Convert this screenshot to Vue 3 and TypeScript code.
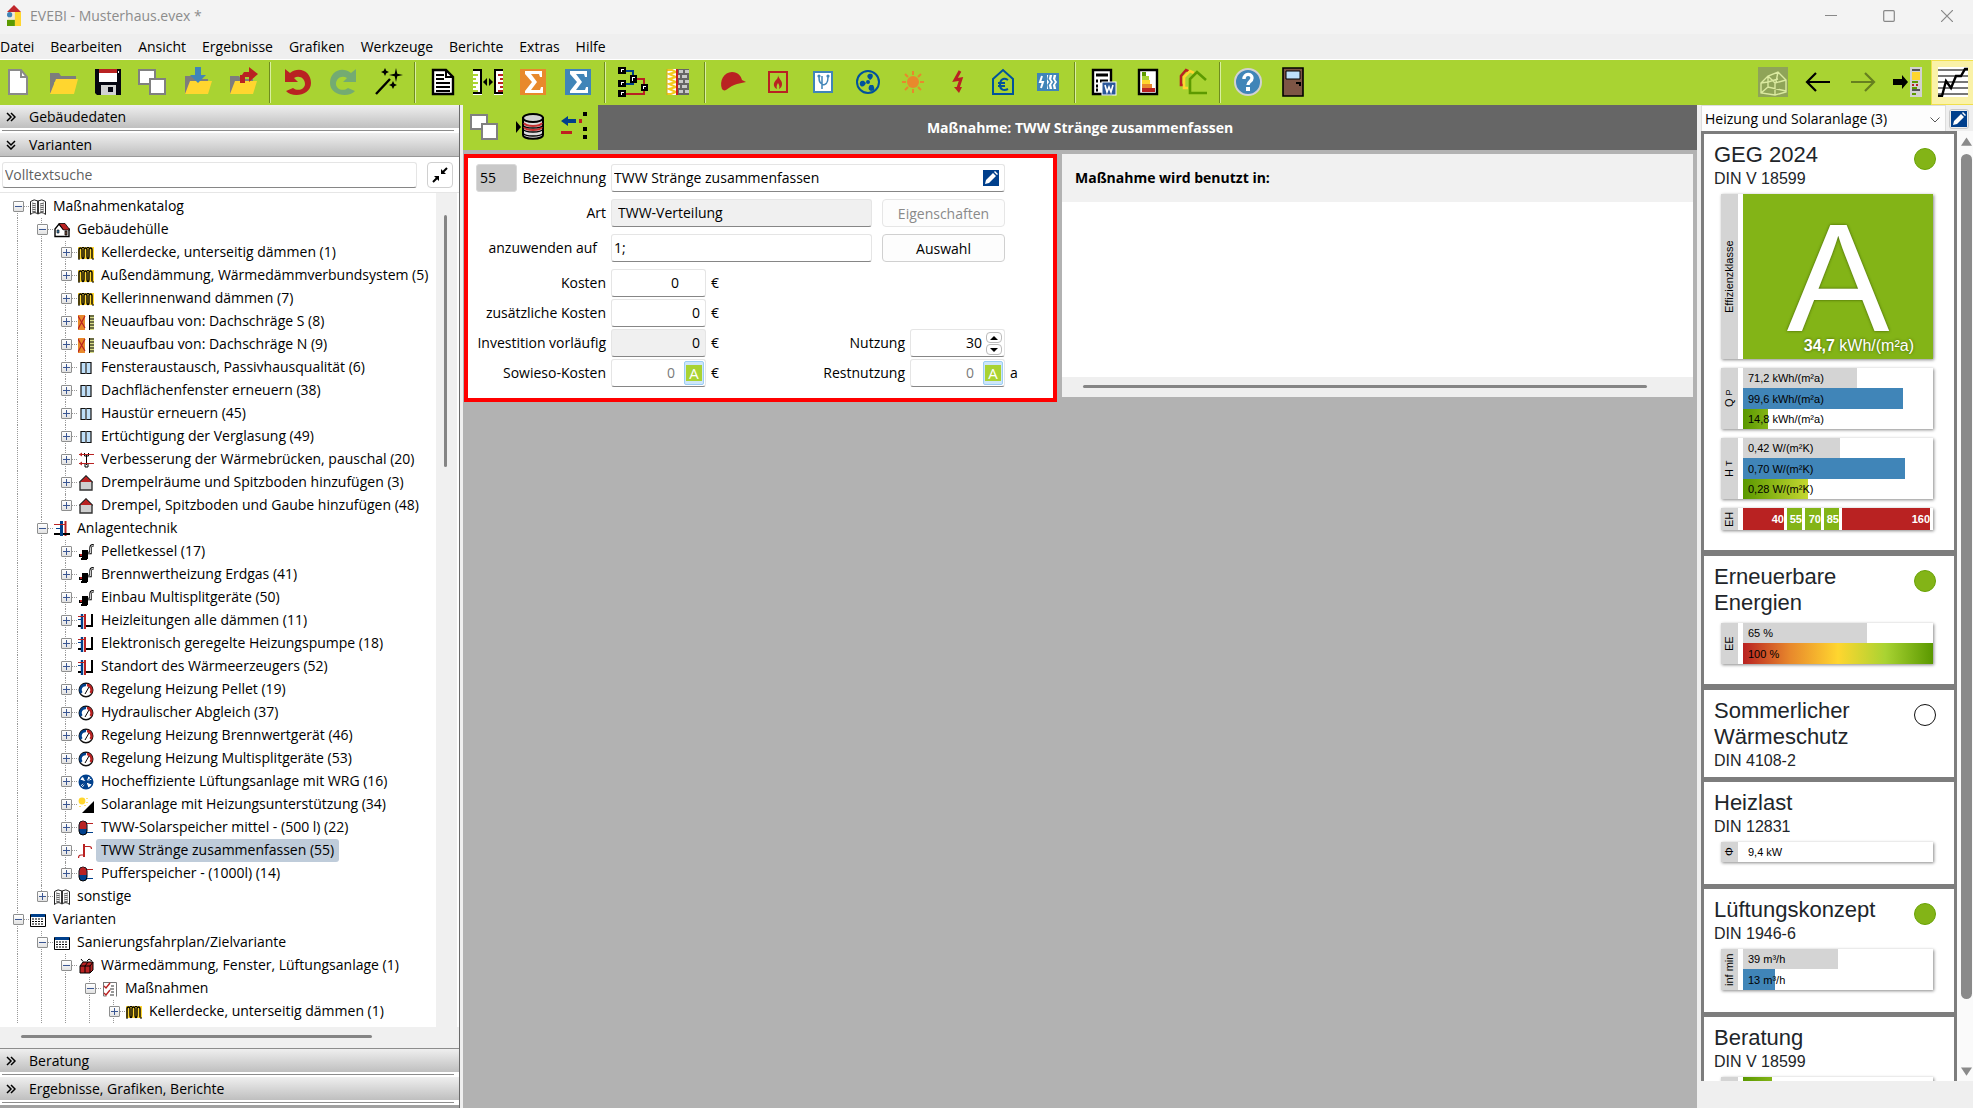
<script setup lang="ts">
import { ref } from 'vue'

interface TreeRow {
  depth: number
  icon: string
  text: string
  open?: boolean
  first?: boolean
  last?: boolean
  selected?: boolean
}
interface Bar {
  text: string
  width: number
  tone: string
}

const menu = ['Datei', 'Bearbeiten', 'Ansicht', 'Ergebnisse', 'Grafiken', 'Werkzeuge', 'Berichte', 'Extras', 'Hilfe']

const toolGroups: { icon: string; label: string }[][] = [
  [
    { icon: 'new', label: 'Neu' },
    { icon: 'open', label: 'Öffnen' },
    { icon: 'save', label: 'Speichern' },
    { icon: 'copy', label: 'Kopieren' },
    { icon: 'import', label: 'Importieren' },
    { icon: 'export', label: 'Exportieren' },
  ],
  [
    { icon: 'undo', label: 'Rückgängig' },
    { icon: 'redo', label: 'Wiederholen' },
    { icon: 'wand', label: 'Assistent' },
  ],
  [
    { icon: 'doc', label: 'Dokument' },
    { icon: 'compare', label: 'Vergleichen' },
    { icon: 'sumOrange', label: 'Summe Bestand' },
    { icon: 'sumBlue', label: 'Summe Variante' },
  ],
  [
    { icon: 'flow', label: 'Schema' },
    { icon: 'wall', label: 'Bauteile' },
  ],
  [
    { icon: 'cap', label: 'Handwerker' },
    { icon: 'flame', label: 'Heizung' },
    { icon: 'pipes', label: 'Leitungen' },
    { icon: 'vent', label: 'Lüftung' },
    { icon: 'sun', label: 'Solar' },
    { icon: 'bolt', label: 'Strom' },
    { icon: 'euro', label: 'Kosten' },
    { icon: 'radiator', label: 'Heizflächen' },
  ],
  [
    { icon: 'word', label: 'Bericht' },
    { icon: 'pass', label: 'Energieausweis' },
    { icon: 'houses', label: 'Sanierungsfahrplan' },
  ],
  [
    { icon: 'help', label: 'Hilfe' },
    { icon: 'door', label: 'Beenden' },
  ],
]
const navTools = [
  { icon: 'model', label: '3D-Modell' },
  { icon: 'back', label: 'Zurück' },
  { icon: 'forward', label: 'Vorwärts' },
  { icon: 'panel', label: 'Seitenleiste' },
  { icon: 'chart', label: 'Diagramm' },
]
const mainTools = [
  { icon: 'copy', label: 'Maßnahme kopieren' },
  { icon: 'database', label: 'Aus Datenbank' },
  { icon: 'assign', label: 'Zuordnen' },
]

const tree: TreeRow[] = [
  { depth: 0, icon: 'book', text: 'Maßnahmenkatalog', open: true, first: true },
  { depth: 1, icon: 'house', text: 'Gebäudehülle', open: true },
  { depth: 2, icon: 'insulation', text: 'Kellerdecke, unterseitig dämmen (1)' },
  { depth: 2, icon: 'insulation', text: 'Außendämmung, Wärmedämmverbundsystem (5)' },
  { depth: 2, icon: 'insulation', text: 'Kellerinnenwand dämmen (7)' },
  { depth: 2, icon: 'rebuild', text: 'Neuaufbau von: Dachschräge S (8)' },
  { depth: 2, icon: 'rebuild', text: 'Neuaufbau von: Dachschräge N (9)' },
  { depth: 2, icon: 'window', text: 'Fensteraustausch, Passivhausqualität (6)' },
  { depth: 2, icon: 'window', text: 'Dachflächenfenster erneuern (38)' },
  { depth: 2, icon: 'window', text: 'Haustür erneuern (45)' },
  { depth: 2, icon: 'window', text: 'Ertüchtigung der Verglasung (49)' },
  { depth: 2, icon: 'bridge', text: 'Verbesserung der Wärmebrücken, pauschal (20)' },
  { depth: 2, icon: 'roof', text: 'Drempelräume und Spitzboden hinzufügen (3)' },
  { depth: 2, icon: 'roof', text: 'Drempel, Spitzboden und Gaube hinzufügen (48)', last: true },
  { depth: 1, icon: 'plant', text: 'Anlagentechnik', open: true },
  { depth: 2, icon: 'boiler', text: 'Pelletkessel (17)' },
  { depth: 2, icon: 'boiler', text: 'Brennwertheizung Erdgas (41)' },
  { depth: 2, icon: 'boiler', text: 'Einbau Multisplitgeräte (50)' },
  { depth: 2, icon: 'line', text: 'Heizleitungen alle dämmen (11)' },
  { depth: 2, icon: 'line', text: 'Elektronisch geregelte Heizungspumpe (18)' },
  { depth: 2, icon: 'line', text: 'Standort des Wärmeerzeugers (52)' },
  { depth: 2, icon: 'gauge', text: 'Regelung Heizung Pellet (19)' },
  { depth: 2, icon: 'gauge', text: 'Hydraulischer Abgleich (37)' },
  { depth: 2, icon: 'gauge', text: 'Regelung Heizung Brennwertgerät (46)' },
  { depth: 2, icon: 'gauge', text: 'Regelung Heizung Multisplitgeräte (53)' },
  { depth: 2, icon: 'fan', text: 'Hocheffiziente Lüftungsanlage mit WRG (16)' },
  { depth: 2, icon: 'solar', text: 'Solaranlage mit Heizungsunterstützung (34)' },
  { depth: 2, icon: 'tank', text: 'TWW-Solarspeicher mittel - (500 l) (22)' },
  { depth: 2, icon: 'tap', text: 'TWW Stränge zusammenfassen (55)', selected: true },
  { depth: 2, icon: 'tank', text: 'Pufferspeicher - (1000l) (14)', last: true },
  { depth: 1, icon: 'book', text: 'sonstige', last: true },
  { depth: 0, icon: 'table', text: 'Varianten', open: true },
  { depth: 1, icon: 'table', text: 'Sanierungsfahrplan/Zielvariante', open: true },
  { depth: 2, icon: 'parcel', text: 'Wärmedämmung, Fenster, Lüftungsanlage (1)', open: true },
  { depth: 3, icon: 'checks', text: 'Maßnahmen', open: true },
  { depth: 4, icon: 'insulation', text: 'Kellerdecke, unterseitig dämmen (1)' },
]
function isOpen(row: TreeRow): boolean {
  return row.open === true
}

const search = ref('')
const number = ref('55')
const title = ref('TWW Stränge zusammenfassen')
const kind = ref('TWW-Verteilung')
const target = ref('1;')
const cost = ref('0')
const extraCost = ref('0')
const invest = ref('0')
const anyway = ref('0')
const usage = ref('30')
const rest = ref('0')
const variant = ref('Heizung und Solaranlage (3)')

const qp: Bar[] = [
  { text: '71,2 kWh/(m²a)', width: 60, tone: 'grey' },
  { text: '99,6 kWh/(m²a)', width: 84, tone: 'blue' },
  { text: '14,8 kWh/(m²a)', width: 13, tone: 'green' },
]
const ht: Bar[] = [
  { text: '0,42 W/(m²K)', width: 51, tone: 'grey' },
  { text: '0,70 W/(m²K)', width: 85, tone: 'blue' },
  { text: '0,28 W/(m²K)', width: 34, tone: 'lime' },
]
const eh = [
  { text: '40', tone: 'red', grow: 41 },
  { text: '55', tone: 'good', grow: 15 },
  { text: '70', tone: 'good', grow: 16 },
  { text: '85', tone: 'good', grow: 15 },
  { text: '160', tone: 'red', grow: 88 },
]
const ee: Bar[] = [
  { text: '65 %', width: 65, tone: 'grey' },
  { text: '100 %', width: 100, tone: 'rainbow' },
]
const vent: Bar[] = [
  { text: '39 m³/h', width: 50, tone: 'grey' },
  { text: '13 m³/h', width: 17, tone: 'blue' },
]

const folder =
  '<path d="M2 9h9l2 3h12v4H2z" fill="#7d7d7d"/><path d="M2 9h5v18H2z" fill="#7d7d7d"/><path d="M7 14h22l-4 13H2z" fill="#ffd62f"/>'
const sigma = (c: string): string =>
  `<path d="M2 2h26v26H2z" fill="${c}"/><path d="M7 4h17v6h-2l-1-3h-8l6 8-6 8h9l1-3h2v6H7v-2l7-9-7-8z" fill="#fff"/>`
const spark = (x: number, y: number, r: number): string =>
  `<path d="M${x} ${y - r}l1.3 ${r - 1.3} ${r - 1.3} 1.3-${r - 1.3} 1.3-1.3 ${r - 1.3}-1.3-${r - 1.3}-${r - 1.3}-1.3 ${r - 1.3}-1.3z"/>`

const big: Record<string, string> = {
  new: '<path d="M6 3h12l6 7v17H6z" fill="#fff" stroke="#8a8a8a" stroke-width="2"/><path d="M18 3v7h6" fill="none" stroke="#8a8a8a" stroke-width="2"/>',
  open: '<path d="M2 6h9l2 3h15v6H2z" fill="#7d7d7d"/><path d="M2 8h4v18H2z" fill="#7d7d7d"/><path d="M8 12h22l-4 15H2z" fill="#ffd62f"/>',
  save: '<path d="M2 2h26v26H4l-2-2z" fill="#050510"/><path d="M6 2h18v4H6z" fill="#b92222"/><path d="M6 6h18v9H6z" fill="#fff"/><path d="M8 18h15v10H8z" fill="#d2d2d2"/><path d="M15 20h5v5h-5z" fill="#050510"/><path d="M25 4h1v2h-1z" fill="#fff"/>',
  copy: '<path d="M1 3h16v14H1z" fill="#fff" stroke="#808080" stroke-width="2"/><path d="M12 12h15v15H12z" fill="#fff" stroke="#808080" stroke-width="2"/>',
  import: folder + '<path d="M12 0h6v8h5l-8 8-8-8h5z" fill="#4085b8"/>',
  export: folder + '<path d="M12 16V8h2l2-3h5V0l9 7-9 8v-5h-4v6z" fill="#b92222"/>',
  undo: '<path d="M2 2v13h13l-4-4c5-3 11 0 11 6 0 5-7 8-12 4l-7 3c6 7 25 5 25-8C28 4 16-1 7 6z" fill="#b92222"/>',
  redo: '<path d="M28 2v13H15l4-4c-5-3-11 0-11 6 0 5 7 8 12 4l7 3c-6 7-25 5-25-8C2 4 14-1 23 6z" fill="#74ab72"/>',
  wand: '<path d="M3 27 17 12" stroke="#000" stroke-width="2.4"/>' + spark(12, 5, 4) + spark(23, 8, 7) + spark(20, 18, 4),
  doc: '<path d="M5 3h13l7 7v17H5z" fill="#fff" stroke="#000" stroke-width="2.4"/><path d="M18 3v7h7" fill="none" stroke="#000" stroke-width="2"/><path d="M8 8h8M8 12h8M8 16h14M8 20h14M8 24h14" stroke="#000" stroke-width="2"/>',
  compare:
    '<path d="M0 2h9v26H0z" fill="#fff"/><path d="M0 3h8v23H0" fill="none" stroke="#000" stroke-width="2"/><path d="M0 8h5M0 12h3M0 16h5M0 20h3M0 24h5" stroke="#a9d332" stroke-width="2"/><path d="M21 2h9v26h-9z" fill="#fff"/><path d="M30 3h-8v23h8" fill="none" stroke="#000" stroke-width="2"/><path d="M25 8h5M27 12h3M25 16h5M27 20h3M25 24h5" stroke="#b92222" stroke-width="2"/><path d="m10 15 4-4v8zM20 15l-4-4v8z"/>',
  sumOrange: sigma('#e8892c'),
  sumBlue: sigma('#4085b8'),
  flow:
    '<path d="M7 4h8v6h4M7 17h8v-5" fill="none" stroke="#003f8c" stroke-width="2"/><path d="M19 12h7v15H7" fill="none" stroke="#b92222" stroke-width="2"/><path d="M0 0h8v7H0zM0 13h8v7H0zM0 23h8v7H0zM12 8h7v8h-7zM23 17h7v7h-7z"/><path d="M3 2h3v1H4v2H3zM3 15h3v1H4v2H3zM3 25h3v1H4v2H3zM14 10h3v1h-2v3h-1zM25 19h3v1h-2v2h-1z" fill="#fff"/>',
  wall:
    '<path d="M4 2h9v26H4z" fill="#fff"/><path d="M4 3h5l4 2-7 2 7 3-7 2 7 3-7 2 7 3-7 2 7 3-5 2H4" fill="none" stroke="#f5c91c" stroke-width="2"/><path d="M4 2v26" stroke="#d5a51d"/><path d="M13 2h2v26h-2z" fill="#c82020"/><path d="M15 2h11v26H15z" fill="#666"/><path d="M16 3h4v3h-4zM22 3h4v3h-4zM15 8h2v3h-2zM19 8h5v3h-5zM16 13h4v3h-4zM22 13h4v3h-4zM15 18h2v3h-2zM19 18h5v3h-5zM16 23h4v3h-4zM22 23h4v3h-4z" fill="#c9c9c9"/>',
  cap: '<path d="M4 22C1 14 6 5 14 5c6 0 9 4 10 8l4 2-9 2c-4 1-7 3-11 6-2 1-3 0-4-1z" fill="#b92222"/>',
  flame: '<rect x="6" y="5" width="18" height="20" fill="none" stroke="#b92222" stroke-width="2"/><path d="M15 8c0 3 4 5 4 9 0 2-1 4-3 5 1-3 0-4-1-6-1 2-2 3-1 6-4-2-4-6-1-9 2-2 2-3 2-5z" fill="#b92222"/>',
  pipes: '<rect x="6" y="5" width="18" height="20" fill="#fff" stroke="#4085b8" stroke-width="2"/><path d="M14 22V9M14 18c5 0 6-3 6-8M14 17c-3-1-3-4-3-8" fill="none" stroke="#4085b8" stroke-width="1.500"/><circle cx="20" cy="9" r="1.600" fill="#4085b8"/><circle cx="11" cy="9" r="1.600" fill="#4085b8"/>',
  vent: '<circle cx="15" cy="15" r="11" fill="none" stroke="#00529c" stroke-width="2"/><circle cx="15" cy="15" r="2" fill="#00529c"/><path d="M15 11c-2-3 1-5 4-4 2 2 0 5-2 6zM11 14c-3-1-5 1-4 4 2 3 5 1 6-2zM17 18c-2 2-2 5 1 6 4 0 4-3 2-6z" fill="#00529c"/>',
  sun: '<circle cx="15" cy="15" r="6" fill="#e8892c"/><path d="M15 4v4M15 22v4M4 15h4M22 15h4M7 7l3 3M20 20l3 3M23 7l-3 3M10 20l-3 3" stroke="#e8892c" stroke-width="2"/>',
  bolt: '<path d="m17 4-5 9 6-1-3 9" fill="none" stroke="#b92222" stroke-width="3"/><path d="M11 20h8l-3 6z" fill="#b92222"/>',
  euro: '<path d="M5 12 15 3l10 9v15H5z" fill="none" stroke="#00529c" stroke-width="2"/><path d="M20 13c-5-3-8 0-8 5s4 6 8 4M10 16h7M10 19h7" fill="none" stroke="#00529c" stroke-width="2"/>',
  radiator: '<path d="M4 6h22v18H4z" fill="#4085b8"/><path d="M14 8h10v14H14z" fill="#fff"/><path d="M16 8l-1 4 2 3-2 3 1 4M20 8l-1 4 2 3-2 3 1 4M24 8l-1 4 2 3-2 3 1 4" fill="none" stroke="#4085b8" stroke-width="1.500"/><path d="m9 9-2 6h3l-2 6" fill="none" stroke="#fff" stroke-width="2"/>',
  word: '<path d="M5 3h18v24H5z" fill="#fff" stroke="#000" stroke-width="2.400"/><path d="M8 8h12M8 14h2M12 14h8M8 19h2M8 23h2" stroke="#000" stroke-width="3"/><rect x="14" y="15" width="14" height="13" fill="#2b579a" stroke="#fff"/><path d="m17 18 2 7 2-5 2 5 2-7" fill="none" stroke="#fff" stroke-width="1.600"/>',
  pass: '<path d="M6 3h18v24H6z" fill="#fff" stroke="#000" stroke-width="2.400"/><path d="M9 5h4v5H9z" fill="#5c9a00"/><path d="M9 9h7v4H9z" fill="#a9d332"/><path d="M9 13h8v4H9z" fill="#ffd62f"/><path d="M9 17h10v4H9z" fill="#e8892c"/><path d="M9 21h13v4H9z" fill="#b92222"/>',
  houses: '<path d="M6 18H3v-9l5-6 4 2" fill="none" stroke="#b92222" stroke-width="2.600"/><path d="M10 21H6V10l6-6 4 2" fill="none" stroke="#ffd62f" stroke-width="2.600"/><path d="M29 26H12V12l7-7 9 8" fill="none" stroke="#5c9a00" stroke-width="2.600"/>',
  help: '<circle cx="15" cy="15" r="13" fill="#4085b8" stroke="#d2d2d2" stroke-width="2"/><path d="M11 12c0-6 8-6 8-1 0 4-4 3-4 7" fill="none" stroke="#fff" stroke-width="3.400"/><path d="M13 20h4v4h-4z" fill="#fff"/>',
  door: '<path d="M5 1h20v28H5z" fill="#7d5545" stroke="#000" stroke-width="1.600"/><path d="M8 4h14v8H8z" fill="#bfe0fa" stroke="#000"/><path d="M18 16h4v3M18 16h3" fill="none" stroke="#000" stroke-width="2"/>',
  model: '<path d="M0 0h30v30H0z" fill="#8fa458"/><path d="M3 26V16l7-7 10-4 8 8v12l-11 3zM17 16v12M10 9l7 7 11-3M10 9v11M20 5l-2 10M3 26l7-6 18 4M3 16l7-1 10-3" fill="none" stroke="#dbeaa0" stroke-width="1.400"/>',
  back: '<path d="M27 15H4M13 6l-9 9 9 9" fill="none" stroke="#000" stroke-width="2.200"/>',
  forward: '<path d="M3 15h23M17 6l9 9-9 9" fill="none" stroke="#66801f" stroke-width="2.200"/>',
  panel: '<path d="M0 12h9V8l6 7-6 7v-4H0z"/><path d="M17 0h12v30H17z" fill="#d2d2d2"/><path d="M19 2h8v2h-8zM19 22h8v2h-8z" fill="#555"/><path d="M19 5h8v8h-8z" fill="#ffd62f"/><path d="M19 14h6v2h-6zM19 20h5v2h-5zM19 26h4v2h-4z" fill="#5c9a00"/><path d="M19 17h2v2h-2zM23 17h2v2h-2z" fill="#b92222"/>',
  chart: '<path d="M0 0h30v30H0z" fill="#fff"/><path d="M0 3h30M0 9h30M0 15h30M0 21h30M0 27h30" stroke="#777" stroke-width="2"/><path d="M0 29h4l4-15 5 7 5-12h5l4-7h3" fill="none" stroke="#000" stroke-width="2.400"/>',
  database: '<path d="m1 9 5 6-5 6z"/><path d="M8 6v17c0 5 20 5 20 0V6z" fill="#ddd" stroke="#000" stroke-width="2"/><ellipse cx="18" cy="6" rx="10" ry="4" fill="#d2d2d2" stroke="#000" stroke-width="2"/><path d="M9 11c2 4 16 4 18 0M9 15c2 4 16 4 18 0" fill="none" stroke="#c43030" stroke-width="2"/><path d="M8 13c2 4 18 4 20 0M8 17c2 4 18 4 20 0M8 21c2 4 18 4 20 0" fill="none" stroke="#000" stroke-width="1.400"/>',
  assign: '<path d="M1 9l7-5v3h8v4H8v3z" fill="#003f8c"/><path d="M19 7h3v4h-3zM1 19h11v3H1z" fill="#c02020"/><path d="M23 0h4v4h-4zM23 15h4v4h-4zM23 23h4v4h-4z"/>',
}

const small: Record<string, string> = {
  book: '<path d="M.5 2.500Q4-.5 8 2q4-2.500 7.500.5v13Q12 12 8 15 4 12 .5 15.500z" fill="#fff" stroke="#222"/><path d="M8 2v13" stroke="#333" stroke-width="2"/><path d="M2 4l4 1M2 6l4 1M2 8l4 1M2 10l4 1M2 12l4 1M10 5l4-1M10 7l4-1M10 9l4-1M10 11l4-1M10 13l4-1" stroke="#555"/>',
  house: '<path d="M1 14.500V7l4-5 4 5h6v7.500z" fill="#fff" stroke="#000" stroke-width="1.400"/><path d="M5 1.500h6l5 6.500H9.500z" fill="#b92222" stroke="#000" stroke-width=".8"/><path d="M3 8h2v3H3z" fill="#4085b8" stroke="#000" stroke-width=".6"/><path d="M11 9h2v4h-2z" fill="#7d5545" stroke="#000" stroke-width=".8"/>',
  insulation: '<path d="M0 2h16v12H0z" fill="#ffd62f"/><path d="M0 14h2M4 2.500h2M9 2.500h2M14 14h2" stroke="#000"/><path d="M1 13.500V5q0-2 1.500-2T4 5v6q0 2.500 1 2.500T6 11V5q0-2 1.500-2T9 5v6q0 2.500 1 2.500t1-2.500V5q0-2 1.500-2T14 5v8.500" fill="none" stroke="#000" stroke-width="1.400"/>',
  rebuild: '<path d="M0 1h7v15H0z" fill="#e8892c"/><path d="m0 2 7 12M7 2 0 15" stroke="#b92222" stroke-width="1.200"/><path d="M11 1h5v15h-5z" fill="#d9dd8a"/><path d="M11.500 1v15M11 2h5M11 5h5M11 8h5M11 11h5M11 14h5" stroke="#000"/>',
  window: '<path d="M3 2.500h10v11H3z" fill="#bfe0fa" stroke="#111" stroke-width="1.200"/><path d="M8 2v12" stroke="#555" stroke-width="1.600"/>',
  bridge: '<path d="M6.500 1v3h4V1M7 12v3h3v-3" fill="none" stroke="#000"/><path d="M8.500 3v10" stroke="#000"/><path d="M1 2.500h15M1 11.500h15" stroke="#b92222" stroke-width="1.200"/><path d="M1 2.500l3-2v4zM1 11.500l3-2v4z" fill="#b92222"/>',
  roof: '<path d="M2 7 8 1l6 6v8H2z" fill="#cfcfcf" stroke="#333" stroke-width="1.400"/><path d="M2 7 8 1l6 6z" fill="#b92222"/><path d="M1 7.500 8 .8l7 6.700" fill="none" stroke="#222"/>',
  plant: '<path d="M7.500 0v15" stroke="#00408c" stroke-width="3"/><path d="M11.500 0v15" stroke="#b92222" stroke-width="2"/><path d="M0 3.500h12" stroke="#b92222"/><path d="M2 7.500h6" stroke="#00408c"/><path d="M0 13h6M9 13h7" stroke="#000" stroke-width="2"/>',
  boiler: '<path d="M4 6h6v9H4z"/><path d="M10 9h2.500V4q0-3 3.500-3" fill="none" stroke="#000" stroke-width="2.400"/><path d="M10 9h2.500V4q0-3 3.500-3" fill="none" stroke="#fff" stroke-width=".8"/><path d="M1 10h3v3H1zM3 14h6v2H3z"/><path d="M2 10h2v2H2z" fill="#b92222"/>',
  line: '<path d="M4 1v15" stroke="#00408c" stroke-width="2.400"/><path d="M7 1v15" stroke="#b92222" stroke-width="2"/><path d="M0 3.500h7" stroke="#b92222"/><path d="M0 6.500h4" stroke="#00408c"/><path d="M0 13h3M8 13h6V1" fill="none" stroke="#000" stroke-width="2"/>',
  gauge: '<circle cx="8" cy="8" r="6.800" fill="#fff" stroke="#111" stroke-width="1.400"/><path d="M3.500 11A5 5 0 0 1 8 3" fill="none" stroke="#00408c" stroke-width="2.400"/><path d="M9 3a5 5 0 0 1 3.500 8" fill="none" stroke="#b92222" stroke-width="2.400"/><path d="m7 12 4-7" stroke="#000"/>',
  fan: '<circle cx="8" cy="8" r="6.800" fill="#fff" stroke="#00408c" stroke-width="1.400"/><path d="M8 8 5 2h5zM8 8l6-2v4zM8 8l2 6H5zM8 8l-6 3V6zM8 8l5-4M8 8l-5 5" fill="#00408c" stroke="#00408c"/>',
  solar: '<circle cx="4" cy="4" r="3.400" fill="#ffd62f"/><path d="M9 1v1M9 5v1M7 8v1M2 9v1" stroke="#ffd62f" stroke-width="1.400"/><path d="M16 4v12H4z"/>',
  tank: '<rect x="1" y="1" width="8" height="14" rx="4" fill="#00408c" stroke="#000"/><path d="M1.500 9V5c0-5 7-5 7 0v4z" fill="#b92222"/><path d="M9 3.500h6" stroke="#b92222"/><path d="M9 12.500h6" stroke="#00408c"/>',
  tap: '<path d="M6 1v13" stroke="#b92222" stroke-width="2"/><path d="M6 3.500h5.500q2 0 2 2.500M.5 15q0-3 2.500-3h3" fill="none" stroke="#b92222" stroke-width="1.200"/>',
  table: '<path d="M.5 2.500h15v12H.5z" fill="#fff" stroke="#000"/><path d="M1 2h14v3H1z" fill="#00408c"/><path d="M2 7h12M2 9.500h12M2 12h12" stroke="#000" stroke-width="1.200" stroke-dasharray="2 1"/>',
  parcel: '<path d="M2 8l3-4h10v8l-3 3H2z" fill="#b92222" stroke="#000"/><path d="M2 8h10l3-4M12 8v7M7 15V8l3-4M5 3.500 3 1M9 3l2-2 3 2" fill="none" stroke="#000"/>',
  checks: '<path d="M1.500 1.500h13v14" fill="none" stroke="#777"/><path d="M1.500 1v14h3" fill="none" stroke="#777"/><path d="m2 5 2 2 4-5M2 12l2 2 4-5" fill="none" stroke="#b92222" stroke-width="1.400"/><path d="M9 5h3M8 8h4M9 11h3M8 14h4" stroke="#333"/>',
}
</script>

<template>
  <div class="app">
    <header class="titlebar">
      <svg class="logo" viewBox="0 0 18 24" aria-hidden="true">
        <path d="M9 0l8 8H1z" fill="#c0262b" />
        <path d="M2 8h14v16H2z" fill="#f0ead8" />
        <path d="M10 8h7v16h-7z" fill="#ffd62f" />
        <circle cx="4" cy="11" r="3" fill="#4085b8" />
        <path d="M1 17h9v7H1z" fill="#5c9a00" />
      </svg>
      <h1>EVEBI - Musterhaus.evex *</h1>
      <div class="window-buttons">
        <button type="button" aria-label="Minimieren">
          <svg viewBox="0 0 12 12"><path d="M0 5.500h12" stroke="#888" /></svg>
        </button>
        <button type="button" aria-label="Maximieren">
          <svg viewBox="0 0 12 12"><rect x=".7" y=".7" width="10.600" height="10.600" rx="1" fill="none" stroke="#888" stroke-width="1.200" /></svg>
        </button>
        <button type="button" aria-label="Schließen">
          <svg viewBox="0 0 12 12"><path d="m0 0 12 12M12 0 0 12" stroke="#888" stroke-width="1.200" /></svg>
        </button>
      </div>
    </header>

    <nav class="menubar" aria-label="Hauptmenü">
      <button v-for="m in menu" :key="m" type="button">{{ m }}</button>
    </nav>

    <div class="toolbar" role="toolbar" aria-label="Werkzeuge">
      <div v-for="(g, i) in toolGroups" :key="i" class="tool-group">
        <button v-for="t in g" :key="t.icon" type="button" class="tool" :aria-label="t.label">
          <svg viewBox="0 0 30 30" v-html="big[t.icon]"></svg>
        </button>
      </div>
      <div class="tool-nav">
        <button v-for="t in navTools" :key="t.icon" type="button" class="tool" :class="{ active: t.icon === 'chart' }" :aria-label="t.label">
          <svg viewBox="0 0 30 30" v-html="big[t.icon]"></svg>
        </button>
      </div>
    </div>

    <div class="body">
      <aside class="sidebar">
        <button type="button" class="section">
          <svg viewBox="0 0 10 10"><path d="m1 1 4 4-4 4M5 1l4 4-4 4" /></svg>Gebäudedaten
        </button>
        <div class="rule"></div>
        <button type="button" class="section" aria-expanded="true">
          <svg viewBox="0 0 10 10"><path d="m1 1 4 4 4-4M1 5l4 4 4-4" /></svg>Varianten
        </button>
        <div class="search">
          <input v-model="search" type="text" placeholder="Volltextsuche" aria-label="Volltextsuche" />
          <button type="button" aria-label="Alle einklappen">
            <svg viewBox="0 0 16 16"><path d="m15 1-4 4M1 15l4-4" stroke="#000" stroke-width="2" /><path d="M9 2v5h5zM2 9h5v5z" /></svg>
          </button>
        </div>
        <div class="tree-box">
          <ul class="tree" role="tree" aria-label="Varianten">
            <li v-for="(r, i) in tree" :key="i" role="treeitem" :aria-level="r.depth + 1" :aria-selected="r.selected === true">
              <span v-for="d in r.depth" :key="d" class="guide"></span>
              <span class="guide node" :class="{ first: r.first, last: r.last }">
                <button type="button" class="expander" :class="{ closed: !isOpen(r) }" :aria-label="isOpen(r) ? 'Einklappen' : 'Ausklappen'"></button>
              </span>
              <svg class="tree-icon" viewBox="0 0 16 16" v-html="small[r.icon]"></svg>
              <span class="tree-text" :class="{ selected: r.selected }">{{ r.text }}</span>
            </li>
          </ul>
          <div class="vscroll"><div></div></div>
        </div>
        <div class="hscroll"><div></div></div>
        <button type="button" class="section">
          <svg viewBox="0 0 10 10"><path d="m1 1 4 4-4 4M5 1l4 4-4 4" /></svg>Beratung
        </button>
        <div class="rule"></div>
        <button type="button" class="section">
          <svg viewBox="0 0 10 10"><path d="m1 1 4 4-4 4M5 1l4 4-4 4" /></svg>Ergebnisse, Grafiken, Berichte
        </button>
        <div class="rule"></div>
        <div class="sidebar-end"></div>
      </aside>

      <main class="main">
        <div class="main-head">
          <div class="main-tools">
            <button v-for="t in mainTools" :key="t.icon" type="button" class="tool" :aria-label="t.label">
              <svg viewBox="0 0 30 30" v-html="big[t.icon]"></svg>
            </button>
          </div>
          <h2>Maßnahme: TWW Stränge zusammenfassen</h2>
        </div>

        <div class="panels">
          <form class="form" @submit.prevent>
            <div class="row">
              <div class="lead">
                <input v-model="number" class="number" type="text" readonly aria-label="Nummer" />
                <label for="f-title">Bezeichnung</label>
              </div>
              <div class="field">
                <input id="f-title" v-model="title" type="text" />
                <button type="button" class="pencil" aria-label="Bezeichnung bearbeiten">
                  <svg viewBox="0 0 16 16"><path d="M0 0h16v16H0z" fill="#003f8c" /><path d="m2 14 1-4 7-7 3 3-7 7zM11 2l1-1 3 3-1 1z" fill="#fff" /></svg>
                </button>
              </div>
              <span class="unit"></span>
            </div>
            <div class="row">
              <label class="lead" for="f-kind">Art</label>
              <div class="field"><input id="f-kind" v-model="kind" class="locked indent" type="text" readonly /></div>
              <button type="button" class="push" disabled>Eigenschaften</button>
              <span class="unit"></span>
            </div>
            <div class="row">
              <label class="lead inset" for="f-target">anzuwenden auf</label>
              <div class="field"><input id="f-target" v-model="target" type="text" /></div>
              <button type="button" class="push">Auswahl</button>
              <span class="unit"></span>
            </div>
            <div class="costs">
              <div class="row">
                <label class="lead" for="f-cost">Kosten</label>
                <div class="amount"><input id="f-cost" v-model="cost" class="room" type="text" /></div>
                <span class="unit">€</span>
              </div>
              <div class="row">
                <label class="lead" for="f-extra">zusätzliche Kosten</label>
                <div class="amount"><input id="f-extra" v-model="extraCost" type="text" /></div>
                <span class="unit">€</span>
              </div>
              <div class="row">
                <label class="lead" for="f-invest">Investition vorläufig</label>
                <div class="amount"><input id="f-invest" v-model="invest" class="locked" type="text" readonly /></div>
                <span class="unit">€</span>
                <label class="second" for="f-usage">Nutzung</label>
                <div class="amount">
                  <input id="f-usage" v-model="usage" class="spin" type="text" />
                  <span class="spinner">
                    <button type="button" aria-label="Mehr"><svg viewBox="0 0 8 4"><path d="M0 4h8L4 0z" /></svg></button>
                    <button type="button" aria-label="Weniger"><svg viewBox="0 0 8 4"><path d="M0 0h8L4 4z" /></svg></button>
                  </span>
                </div>
                <span class="unit"></span>
              </div>
              <div class="row">
                <label class="lead" for="f-anyway">Sowieso-Kosten</label>
                <div class="amount">
                  <input id="f-anyway" v-model="anyway" class="derived" type="text" />
                  <button type="button" class="auto"><span>A</span></button>
                </div>
                <span class="unit">€</span>
                <label class="second" for="f-rest">Restnutzung</label>
                <div class="amount">
                  <input id="f-rest" v-model="rest" class="derived" type="text" />
                  <button type="button" class="auto"><span>A</span></button>
                </div>
                <span class="unit">a</span>
              </div>
            </div>
          </form>

          <section class="used">
            <h3>Maßnahme wird benutzt in:</h3>
            <div class="used-list"></div>
            <div class="used-scroll"><div></div></div>
          </section>
        </div>
      </main>

      <aside class="results">
        <div class="variant">
          <div class="variant-select">
            <select v-model="variant" aria-label="Variante">
              <option>Heizung und Solaranlage (3)</option>
            </select>
            <svg viewBox="0 0 10 6"><path d="m.5.5 4.500 4.500L9.500.5" fill="none" stroke="#555" /></svg>
          </div>
          <button type="button" class="variant-edit" aria-label="Variante bearbeiten">
            <svg viewBox="0 0 16 16"><path d="M0 0h16v16H0z" fill="#003f8c" /><path d="m2 14 1-4 7-7 3 3-7 7zM11 2l1-1 3 3-1 1z" fill="#fff" /></svg>
          </button>
        </div>

        <div class="results-view">
          <div class="cards">
            <article class="card c-geg">
              <header>
                <h4>GEG 2024</h4>
                <p>DIN V 18599</p>
                <i class="dot ok"></i>
              </header>
              <div class="meter">
                <span class="tag">Effizienzklasse</span>
                <div class="grade">
                  <b>A</b>
                  <p><strong>34,7</strong> kWh/(m²a)</p>
                </div>
              </div>
              <div class="meter">
                <span class="tag">Q <small>P</small></span>
                <div class="bars">
                  <div v-for="b in qp" :key="b.text" class="bar">
                    <i :class="b.tone" :style="{ width: b.width + '%' }"></i><span>{{ b.text }}</span>
                  </div>
                </div>
              </div>
              <div class="meter">
                <span class="tag">H <small>T</small></span>
                <div class="bars">
                  <div v-for="b in ht" :key="b.text" class="bar">
                    <i :class="b.tone" :style="{ width: b.width + '%' }"></i><span>{{ b.text }}</span>
                  </div>
                </div>
              </div>
              <div class="meter">
                <span class="tag">EH</span>
                <div class="steps">
                  <span v-for="s in eh" :key="s.text" :class="s.tone" :style="{ flexGrow: s.grow }">{{ s.text }}</span>
                </div>
              </div>
            </article>

            <article class="card c-ee">
              <header>
                <h4>Erneuerbare Energien</h4>
                <i class="dot ok"></i>
              </header>
              <div class="meter">
                <span class="tag">EE</span>
                <div class="bars">
                  <div v-for="b in ee" :key="b.text" class="bar">
                    <i :class="b.tone" :style="{ width: b.width + '%' }"></i><span>{{ b.text }}</span>
                  </div>
                </div>
              </div>
            </article>

            <article class="card c-summer">
              <header>
                <h4>Sommerlicher Wärmeschutz</h4>
                <p>DIN 4108-2</p>
                <i class="dot"></i>
              </header>
            </article>

            <article class="card c-low">
              <header>
                <h4>Heizlast</h4>
                <p>DIN 12831</p>
              </header>
              <div class="meter">
                <span class="tag">Φ</span>
                <div class="bars">
                  <div class="bar"><span>9,4 kW</span></div>
                </div>
              </div>
            </article>

            <article class="card c-low">
              <header>
                <h4>Lüftungskonzept</h4>
                <p>DIN 1946-6</p>
                <i class="dot ok"></i>
              </header>
              <div class="meter">
                <span class="tag">inf min</span>
                <div class="bars">
                  <div v-for="b in vent" :key="b.text" class="bar">
                    <i :class="b.tone" :style="{ width: b.width + '%' }"></i><span>{{ b.text }}</span>
                  </div>
                </div>
              </div>
            </article>

            <article class="card">
              <header>
                <h4>Beratung</h4>
                <p>DIN V 18599</p>
              </header>
              <div class="meter">
                <span class="tag"></span>
                <div class="bars">
                  <div class="bar"><i class="green" :style="{ width: '15%' }"></i></div>
                </div>
              </div>
            </article>
          </div>
          <div class="results-scroll">
            <svg viewBox="0 0 12 9"><path d="M6 0l6 9H0z" fill="#8a8a8a" /></svg>
            <div></div>
            <svg viewBox="0 0 12 9"><path d="M0 0h12L6 9z" fill="#8a8a8a" /></svg>
          </div>
        </div>
      </aside>
    </div>
  </div>
</template>

<style>
html,
body {
  margin: 0;
  overflow: hidden;
}
</style>

<style scoped>
.app {
  display: flex;
  flex-direction: column;
  height: 100vh;
  overflow: hidden;
  background: #efefef;
  color: #000;
  font: 14px/20px 'Open Sans', 'Noto Sans', sans-serif;
}
.app *,
.app *::before,
.app *::after {
  box-sizing: border-box;
}
h1,
h2,
h3,
h4,
p,
ul {
  margin: 0;
  padding: 0;
  font-weight: 400;
}
button,
input,
select {
  margin: 0;
  padding: 0;
  border: 0;
  background: none;
  color: inherit;
  font: inherit;
}
svg {
  display: block;
  flex: none;
}

/* title and menu */
.titlebar {
  display: flex;
  flex: none;
  align-items: center;
  height: 34px;
  padding: 0 0 3px 5px;
  background: #f3f3f3;
  color: #8c8c8c;
}
.logo {
  width: 18px;
  height: 21px;
}
.titlebar h1 {
  margin-left: 7px;
  font-size: 14px;
}
.window-buttons {
  display: flex;
  margin-left: auto;
}
.window-buttons button {
  display: flex;
  align-items: center;
  justify-content: center;
  width: 58px;
  height: 30px;
}
.window-buttons button:last-child {
  margin-right: -3px;
}
.window-buttons svg {
  width: 12px;
  height: 12px;
}
.menubar {
  display: flex;
  flex: none;
  height: 26px;
  padding-top: 1px;
  border-bottom: 1px solid #fff;
}
.menubar button {
  padding: 0 8px;
}
.menubar button:first-child {
  margin-left: -8px;
}

/* toolbars */
.toolbar {
  display: flex;
  flex: none;
  height: 45px;
  overflow: hidden;
  background: #a9d332;
}
.tool-group {
  display: flex;
}
.tool-group:first-child {
  margin-left: -4px;
}
.tool-group + .tool-group::before {
  content: '';
  width: 2px;
  margin: 2px 5px 2px 3px;
  border-left: 1px solid #6f8c1f;
  border-right: 1px solid #d9efa0;
}
.tool {
  width: 45px;
  height: 45px;
  padding: 7px 7px 8px;
}
.tool svg {
  width: 30px;
  height: 30px;
}
.tool-nav {
  display: flex;
  margin-right: -3px;
  margin-left: auto;
}
.tool.active {
  padding: 6px 6px 7px;
  border: 1px solid #f1e04c;
  background: #faf2a8;
}

.body {
  display: flex;
  flex: 1;
  min-height: 0;
}

/* sidebar */
.sidebar {
  display: flex;
  flex: none;
  flex-direction: column;
  width: 460px;
  border-right: 1px solid #6a6a6a;
  background: #fff;
}
.section {
  display: flex;
  flex: none;
  align-items: center;
  height: 23px;
  padding-left: 6px;
  background: linear-gradient(#efefef, #bfbfbf);
  text-align: left;
}
.section svg {
  width: 10px;
  height: 10px;
  margin-right: 13px;
  fill: none;
  stroke: #000;
  stroke-width: 1.5;
}
.rule {
  flex: none;
  height: 5px;
  margin: 0 5px 0 2px;
  background: linear-gradient(#fff 2px, #8d8d8d 2px, #8d8d8d 3px, #fff 3px);
}
.search {
  display: flex;
  flex: none;
  gap: 10px;
  height: 37px;
  padding: 5px 6px 4px 2px;
  border-top: 1px solid #999;
  border-bottom: 1px solid #e6e6e6;
}
.search input,
.field input,
.amount input,
.number {
  border: 1px solid #e5e5e5;
  border-bottom-color: #868686;
  border-radius: 3px;
  background: #fff;
}
.search input {
  flex: 1;
  min-width: 0;
  padding: 0 2px;
}
.search input::placeholder {
  color: #5f5f5f;
  opacity: 1;
}
.search button {
  display: flex;
  align-items: center;
  justify-content: center;
  width: 26px;
  border: 1px solid #d0d0d0;
  border-radius: 4px;
}
.search svg {
  width: 16px;
  height: 16px;
}
.tree-box {
  display: flex;
  flex: 1;
  min-height: 0;
  padding-right: 2px;
}
.tree {
  flex: 1;
  overflow: hidden;
  padding: 2px 0 0 6px;
  list-style: none;
}
.tree li {
  display: flex;
  align-items: center;
  height: 23px;
  white-space: nowrap;
}
.guide {
  position: relative;
  flex: none;
  width: 24px;
  height: 23px;
}
.guide::before {
  content: '';
  position: absolute;
  top: 0;
  bottom: 0;
  left: 11px;
  border-left: 1px dotted #999;
}
.guide.first::before {
  top: 11px;
}
.guide.last::before {
  bottom: 11px;
}
.node::after {
  content: '';
  position: absolute;
  top: 11px;
  right: 1px;
  left: 12px;
  border-top: 1px dotted #999;
}
.expander {
  position: absolute;
  z-index: 1;
  top: 6px;
  left: 7px;
  width: 11px;
  height: 11px;
  border: 1px solid #8e8f8f;
  border-radius: 1px;
  background: linear-gradient(#fff, #e2e2e2);
}
.expander::before,
.expander.closed::after {
  content: '';
  position: absolute;
  top: 4px;
  left: 1px;
  width: 7px;
  height: 1px;
  background: #3b5793;
}
.expander.closed::after {
  top: 1px;
  left: 4px;
  width: 1px;
  height: 7px;
}
.tree-icon {
  width: 16px;
  height: 16px;
}
.tree-text {
  height: 23px;
  margin-left: 2px;
  padding: 0 5px;
  border-radius: 3px;
  line-height: 22px;
}
.tree-text.selected {
  background: #bfccda;
}
.vscroll {
  flex: none;
  width: 21px;
  padding: 22px 0 0 8px;
  background: #f0f0f0;
}
.vscroll div {
  width: 3px;
  height: 31%;
  border-radius: 2px;
  background: #858585;
}
.hscroll {
  flex: none;
  height: 22px;
  padding: 8px 87px 0 21px;
  border-bottom: 1px solid #8d8d8d;
  background: #f0f0f0;
}
.hscroll div {
  height: 3px;
  border-radius: 2px;
  background: #858585;
}
.sidebar-end {
  flex: none;
  height: 3px;
  background: #a0a0a0;
}

/* main area */
.main {
  flex: 1;
  min-width: 0;
  margin: 0 4px 0 3px;
  background: #b2b2b2;
}
.main-head {
  display: grid;
  grid-template-columns: 1fr auto 1fr;
  height: 45px;
  background: #666;
}
.main-tools {
  display: flex;
  justify-self: start;
  background: #a9d332;
}
.main-head h2 {
  color: #fff;
  font-size: 14px;
  font-weight: 700;
  line-height: 45px;
}
.panels {
  display: flex;
  align-items: flex-start;
  gap: 5px;
  padding: 4px 4px 0 1px;
}
.form {
  display: flex;
  flex: none;
  flex-direction: column;
  gap: 7px;
  width: 593px;
  padding: 6px 28px 11px 8px;
  border: 4px solid #f00;
  background: #fff;
}
.costs {
  display: flex;
  flex-direction: column;
  gap: 2px;
}
.row {
  display: flex;
  gap: 5px;
  height: 28px;
  line-height: 28px;
  white-space: nowrap;
}
.lead {
  display: flex;
  flex: none;
  justify-content: flex-end;
  width: 130px;
}
div.lead {
  justify-content: space-between;
}
.lead.inset {
  padding-right: 9px;
}
.number {
  width: 41px;
  padding: 0 3px;
  border-color: #d8d8d8;
  background: #c8c8c8;
}
.field {
  position: relative;
  flex: 1;
}
.field input {
  width: 100%;
  height: 28px;
  padding: 0 2px;
}
.field input.locked,
.amount input.locked {
  background: #f0f0f0;
}
.field input.indent {
  padding-left: 6px;
}
.pencil {
  position: absolute;
  top: 6px;
  right: 6px;
  width: 16px;
  height: 16px;
}
.push {
  width: 123px;
  margin-left: 5px;
  border: 1px solid #d0d0d0;
  border-radius: 4px;
  background: #fdfdfd;
}
.push:disabled {
  border-color: #e6e6e6;
  color: #8a8a8a;
}
.unit {
  width: 15px;
}
.second {
  flex: 1;
  text-align: right;
}
.amount {
  position: relative;
  width: 95px;
}
.amount input {
  width: 100%;
  height: 28px;
  padding: 0 5px;
  text-align: right;
}
.amount input.room {
  padding-right: 26px;
}
.amount input.spin {
  padding-right: 22px;
}
.amount input.derived {
  padding-right: 30px;
  color: #7b7b7b;
}
.auto {
  position: absolute;
  top: 2px;
  right: 2px;
  width: 20px;
  height: 24px;
  padding: 3px 1px;
  border: 1px solid #9ccdf3;
  border-radius: 2px;
  background: #cde6fa;
}
.auto span {
  display: block;
  background: #a9d332;
  color: #fff;
  font-size: 15px;
  line-height: 16px;
}
.spinner {
  position: absolute;
  top: 3px;
  right: 3px;
  display: flex;
  flex-direction: column;
  gap: 1px;
}
.spinner button {
  display: flex;
  align-items: center;
  justify-content: center;
  width: 16px;
  height: 11px;
  border: 1px solid #bbb;
  border-radius: 4px;
}
.spinner svg {
  width: 8px;
  height: 4px;
}
.used {
  flex: 1;
  min-width: 0;
  background: #fff;
}
.used h3 {
  padding-left: 13px;
  background: #f1f1f1;
  font-size: 14px;
  font-weight: 700;
  line-height: 48px;
}
.used-list {
  height: 175px;
}
.used-scroll {
  height: 20px;
  padding: 8px 46px 0 21px;
  background: #efefef;
}
.used-scroll div {
  height: 3px;
  border-radius: 2px;
  background: #858585;
}

/* result cards */
.results {
  display: flex;
  flex: none;
  flex-direction: column;
  width: 272px;
  padding-bottom: 27px;
}
.variant {
  display: flex;
  flex: none;
  gap: 3px;
  height: 26px;
}
.variant-select {
  position: relative;
  width: 245px;
  border: 1px solid #ddd;
  border-bottom: 0;
  background: #fdfdfd;
}
.variant-select select {
  width: 100%;
  height: 25px;
  padding-left: 3px;
  appearance: none;
}
.variant-select svg {
  position: absolute;
  top: 11px;
  right: 5px;
  width: 10px;
  height: 6px;
}
.variant-edit {
  width: 20px;
  height: 20px;
  margin-top: 4px;
  padding: 1px;
  border: 1px solid #c8c8c8;
  border-radius: 3px;
}
.variant-edit svg {
  width: 16px;
  height: 16px;
}
.results-view {
  display: flex;
  flex: 1;
  min-height: 0;
}
.cards {
  display: flex;
  flex: 1;
  flex-direction: column;
  gap: 5px;
  overflow: hidden;
  padding: 3px 3px 0;
  background: #7d7d7d;
  font-family: 'Liberation Sans', Arial, sans-serif;
}
.card {
  flex: none;
  padding: 8px 21px 20px 17px;
  background: #fff;
}
.card header {
  position: relative;
  margin-left: -7px;
  color: #212529;
}
.card h4 {
  width: 170px;
  font-size: 22px;
  line-height: 26px;
}
.card header p {
  font-size: 16px;
  line-height: 22px;
}
.dot {
  position: absolute;
  top: 6px;
  right: -3px;
  width: 22px;
  height: 22px;
  border: 1px solid #111;
  border-radius: 50%;
}
.dot.ok {
  border-color: #6aa307;
  background: #83b417;
}
.meter {
  display: flex;
  box-shadow: 1px 1px 3px #888;
}
.card header + .meter {
  margin-top: 4px;
}
.meter + .meter {
  margin-top: 9px;
}
.tag {
  flex: none;
  width: 17px;
  background: #d4d4d4;
  font-size: 11px;
  line-height: 17px;
  text-align: center;
  transform: rotate(180deg);
  writing-mode: vertical-rl;
}
.tag small {
  font-size: 9px;
}
.bars,
.steps,
.grade {
  flex: 1;
  margin-left: 5px;
}
.grade {
  height: 165px;
  padding-top: 6px;
  background: #83b417;
  color: #fff;
  text-align: center;
  text-shadow: 0 0 3px #3d5a00;
}
.grade b {
  display: block;
  height: 138px;
  font-size: 154px;
  font-weight: 400;
  line-height: 156px;
}
.grade p {
  padding-right: 19px;
  font-size: 16px;
  line-height: 16px;
  text-align: right;
}
.bar {
  display: grid;
  align-items: center;
  height: 20px;
  font-size: 11px;
  line-height: 20px;
}
.bar:nth-child(2) {
  height: 21px;
}
.bar > * {
  grid-area: 1 / 1;
}
.bar i {
  align-self: stretch;
}
.bar span {
  padding-left: 5px;
}
.bar .grey {
  background: #d4d4d4;
}
.bar .blue {
  background: #4085b8;
}
.bar .green {
  background: linear-gradient(90deg, #5a9800, #83b417);
}
.bar .lime {
  background: linear-gradient(90deg, #5a9800, #c4d830);
}
.bar .rainbow {
  background: linear-gradient(90deg, #b92222, #e8892c 25%, #ffd62f 50%, #a9d332 75%, #5a9800);
}
.steps {
  display: flex;
  gap: 3px;
  height: 22px;
  padding-right: 3px;
  color: #fff;
  font-size: 11px;
  font-weight: 700;
  line-height: 22px;
  text-align: right;
}
.steps span {
  flex-basis: 0;
}
.steps .red {
  background: #b92222;
}
.steps .good {
  background: #83b417;
}
.c-geg,
.c-ee {
  margin-bottom: 1px;
}
.c-ee h4 {
  margin-bottom: 7px;
}
.card.c-ee header + .meter {
  margin-top: 0;
}
.c-summer {
  padding-bottom: 5px;
}
.c-low {
  padding-bottom: 22px;
}
.results-scroll {
  display: flex;
  flex: none;
  flex-direction: column;
  align-items: center;
  width: 16px;
  padding: 6px 1px 5px 4px;
  background: #fafafa;
}
.results-scroll svg {
  width: 11px;
  height: 9px;
}
.results-scroll div {
  width: 11px;
  height: 90%;
  margin: 8px 0 auto;
  border-radius: 6px;
  background: #8a8a8a;
}
</style>
